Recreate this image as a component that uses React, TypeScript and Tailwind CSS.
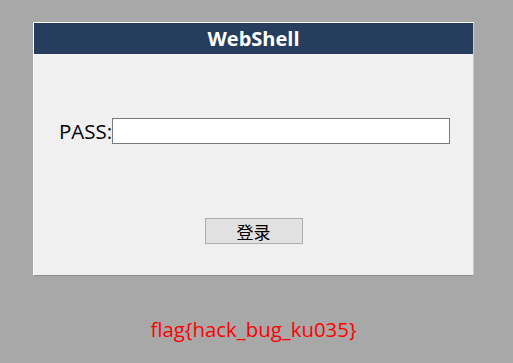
export default function App() {
  return (
    <div className="w-[513px] h-[363px] bg-[#a8a8a8] pt-[22px] pl-[33px] flex flex-col" style={{ fontFamily: '"Open Sans", "Noto Sans", sans-serif' }}>
      <div className="w-[441px] h-[254px] bg-[#f0f0f0] border-t border-l border-t-white border-l-white border-b border-r border-b-[#8c8c8c] border-r-[#c8c8c8] flex flex-col">
        <div className="h-[31px] bg-[#273d5e] text-white font-bold text-[20px] leading-[31px] text-center">WebShell</div>
        <div className="flex items-center mt-[64px] pl-[25px]">
          <span className="text-[20.5px] text-black leading-none">PASS:</span>
          <input className="w-[338px] h-[26px] bg-white border border-[#7a7a7a] outline-none" />
        </div>
        <div className="flex justify-center mt-[74px]">
          <button className="w-[98px] h-[26px] bg-[#e1e1e1] border border-[#adadad] text-[17px] text-black leading-none" style={{ fontFamily: '"Noto Sans CJK SC", sans-serif' }}>登录</button>
        </div>
      </div>
      <div className="w-[441px] text-center text-[#ff0000] text-[20.4px] mt-[40px] leading-[27px]">flag{'{'}hack_bug_ku035{'}'}</div>
    </div>
  );
}
